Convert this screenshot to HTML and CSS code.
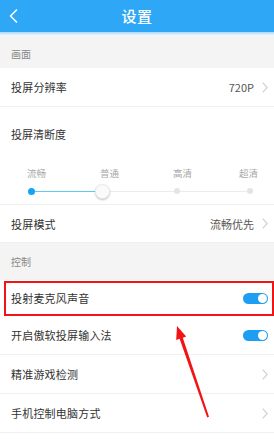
FILE: index.html
```html
<!DOCTYPE html>
<html lang="zh">
<head>
<meta charset="utf-8">
<link rel="stylesheet" href="styles.css">
</head>
<body>
<div class="page">
  <header class="topbar">
    <svg class="back" width="20" height="24" viewBox="0 0 20 24"><polyline points="16.5,6 10.5,12 16.5,18" fill="none" stroke="#fff" stroke-width="1.6" stroke-linecap="round" stroke-linejoin="round"/></svg>
    <h1 class="title">设置</h1>
  </header>
  <div class="band"></div>

  <div class="section first">画面</div>
  <div class="row">
    <span class="label">投屏分辨率</span>
    <span class="right"><span class="value">720P</span><svg class="chev" width="6" height="11" viewBox="0 0 6 11"><polyline points="0.7,0.7 5.2,5.5 0.7,10.3" fill="none" stroke="#cfcfcf" stroke-width="1.1"/></svg></span>
  </div>

  <div class="clarity">
    <div class="clarity-title">投屏清断度</div>
    <div class="ticks">
      <span class="tick t1">流畅</span>
      <span class="tick t2">普通</span>
      <span class="tick t3">高清</span>
      <span class="tick t4">超清</span>
    </div>
    <div class="track">
      <span class="slot s1"><span class="dot blue"></span></span>
      <span class="slot s2"><span class="knob"></span></span>
      <span class="slot s3"><span class="dot grey"></span></span>
      <span class="slot s4"><span class="dot grey"></span></span>
    </div>
  </div>

  <div class="row short">
    <span class="label">投屏模式</span>
    <span class="right"><span class="value">流畅优先</span><svg class="chev" width="6" height="11" viewBox="0 0 6 11"><polyline points="0.7,0.7 5.2,5.5 0.7,10.3" fill="none" stroke="#cfcfcf" stroke-width="1.1"/></svg></span>
  </div>

  <div class="section second">控制</div>
  <div class="row marked">
    <span class="label">投射麦克风声音</span>
    <span class="toggle"><span class="thumb"></span></span>
  </div>
  <div class="row">
    <span class="label">开启傲软投屏输入法</span>
    <span class="toggle"><span class="thumb"></span></span>
  </div>
  <div class="row">
    <span class="label">精准游戏检测</span>
    <span class="right"><svg class="chev" width="6" height="11" viewBox="0 0 6 11"><polyline points="0.7,0.7 5.2,5.5 0.7,10.3" fill="none" stroke="#cfcfcf" stroke-width="1.1"/></svg></span>
  </div>
  <div class="row">
    <span class="label">手机控制电脑方式</span>
    <span class="right"><svg class="chev" width="6" height="11" viewBox="0 0 6 11"><polyline points="0.7,0.7 5.2,5.5 0.7,10.3" fill="none" stroke="#cfcfcf" stroke-width="1.1"/></svg></span>
  </div>

  <svg class="arrow" width="274" height="447" viewBox="0 0 274 447">
    <polygon points="177,326 186.2,336.6 182.8,337.7 209,416.8 207.2,417.4 179.6,338.8 176.2,340" fill="#f21414"/>
  </svg>
</div>
</body>
</html>
```

FILE: styles.css
```css
* { box-sizing: border-box; }
html, body { margin: 0; padding: 0; background: #fff; }
body {
  font-family: "Noto Sans CJK SC", "Noto Sans", sans-serif;
  color: #333;
}
.page {
  position: relative;
  width: 274px;
  min-height: 447px;
  overflow: hidden;
}
.topbar {
  height: 32px;
  background: #2ea8f6;
  display: flex;
  align-items: center;
  justify-content: center;
  position: relative;
}
.back {
  position: absolute;
  left: 0;
  top: 4px;
}
.title {
  margin: 0;
  font-size: 15px;
  font-weight: 500;
  color: #fff;
  line-height: 20px;
  letter-spacing: 0.5px;
}
.band {
  height: 3px;
  background: linear-gradient(#a9dafb, #e6f3fc);
}
.section {
  background: #f4f4f4;
  color: #888;
  font-size: 10px;
  padding-left: 11px;
  display: flex;
  align-items: center;
}
.section.first { height: 33px; padding-top: 4px; }
.section.second { height: 37px; }
.row {
  height: 39px;
  padding: 0 6px 0 11px;
  display: flex;
  align-items: center;
  justify-content: space-between;
  border-bottom: 1px solid #efefef;
  background: #fff;
}
.row.short { height: 38px; }
.row.marked {
  height: 36px;
  border-bottom: none;
  position: relative;
}
.row.marked::after {
  content: "";
  position: absolute;
  left: 4px;
  right: 0;
  top: 1px;
  bottom: 0;
  border: 2px solid #f21414;
}
.label {
  font-size: 11px;
  color: #333;
  letter-spacing: 0.2px;
}
.right {
  display: flex;
  align-items: center;
  gap: 8px;
}
.value {
  font-size: 11px;
  color: #555;
}
.chev { display: block; }
.clarity {
  height: 98px;
  border-bottom: 1px solid #efefef;
}
.clarity-title {
  height: 54px;
  padding-left: 11px;
  display: flex;
  align-items: center;
  font-size: 11px;
  color: #333;
}
.ticks {
  margin-top: 4px;
  height: 16px;
  display: flex;
  align-items: center;
  padding: 0 16px 0 27px;
}
.tick {
  font-size: 9.5px;
  color: #a8a8a8;
  width: 19px;
  white-space: nowrap;
}
.t2, .t3 { margin-left: 54px; }
.t4 { margin-left: auto; }
.track {
  height: 20px;
  display: flex;
  align-items: center;
  padding-left: 21px;
  background:
    linear-gradient(#5ccbf4, #5ccbf4) no-repeat 31px 50% / 68px 1px,
    linear-gradient(#ececec, #ececec) no-repeat 102px 50% / 148px 1px;
}
.slot {
  width: 20px;
  height: 20px;
  display: flex;
  align-items: center;
  justify-content: center;
}
.s2 { margin-left: 51px; }
.s3 { margin-left: 55px; }
.s4 { margin-left: 53px; }
.dot { display: block; border-radius: 50%; }
.dot.blue { width: 7px; height: 7px; background: #11a6f3; }
.dot.grey { width: 6px; height: 6px; background: #e4e4e4; }
.knob {
  display: block;
  width: 15px;
  height: 15px;
  border-radius: 50%;
  background: #fafafa;
  box-shadow: 0 1px 2px rgba(0,0,0,0.25);
  border: 1px solid #ececec;
}
.toggle {
  width: 25px;
  height: 11px;
  border-radius: 6px;
  background: #1e9ef2;
  display: flex;
  align-items: center;
  justify-content: flex-end;
  padding-right: 1px;
}
.thumb {
  width: 9px;
  height: 9px;
  border-radius: 50%;
  background: #fff;
}
.arrow {
  position: absolute;
  left: 0;
  top: 0;
  pointer-events: none;
}
```
